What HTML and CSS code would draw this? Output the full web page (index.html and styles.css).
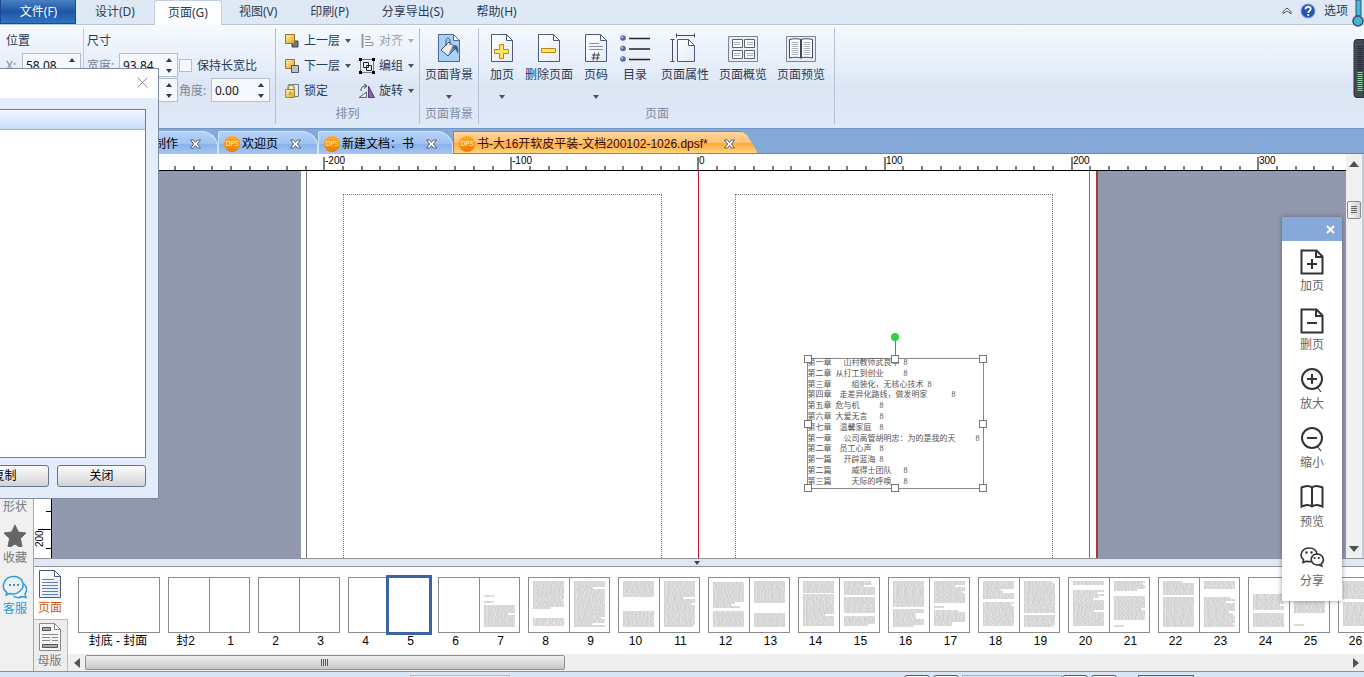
FILE: index.html
```html
<!DOCTYPE html>
<html lang="zh-CN">
<head>
<meta charset="utf-8">
<title>书-大16开软皮平装</title>
<link rel="stylesheet" href="styles.css">
</head>
<body>
<svg class="defs" aria-hidden="true">
  <defs>
    <linearGradient id="gold" x1="0" y1="0" x2="1" y2="1"><stop offset="0" stop-color="#fff3b0"/><stop offset="1" stop-color="#e0a020"/></linearGradient>
    <linearGradient id="paper" x1="0" y1="0" x2="1" y2="1"><stop offset="0" stop-color="#fff"/><stop offset="1" stop-color="#e4eaf6"/></linearGradient>
    <linearGradient id="orange" x1="0" y1="0" x2="0" y2="1"><stop offset="0" stop-color="#f9b02c"/><stop offset="1" stop-color="#ee7a00"/></linearGradient>
    <symbol id="logo" viewBox="0 0 16 16"><circle cx="8" cy="8" r="8" fill="url(#orange)"/><text x="8" y="10" text-anchor="middle" class="logo-text">DPS</text></symbol>
    <symbol id="close" viewBox="0 0 11 10"><path d="M.5 1h3l2 2.400 2-2.400h3L7.400 5l3.100 4h-3l-2-2.400L3.500 9h-3l3.100-4z" fill="#fff" stroke="#56606e" stroke-width="1"/></symbol>
    <symbol id="up" viewBox="0 0 6 4"><path d="M0 4h6L3 0z"/></symbol>
    <symbol id="down" viewBox="0 0 6 4"><path d="M0 0h6L3 4z"/></symbol>
    <symbol id="sheet" viewBox="0 0 24 30"><path d="M1.500 1.500h15l6 6v21h-21z" fill="url(#paper)" stroke="#4c5c78"/><path d="M16.500 1.500v6h6z" fill="#fff" stroke="#4c5c78"/></symbol>
  </defs>
</svg>
<div class="app">
  <nav class="menubar">
    <button class="menu file">文件(F)</button>
    <button class="menu">设计(D)</button>
    <button class="menu current">页面(G)</button>
    <button class="menu">视图(V)</button>
    <button class="menu">印刷(P)</button>
    <button class="menu">分享导出(S)</button>
    <button class="menu">帮助(H)</button>
    <div class="menu-end">
      <svg width="10" height="8" viewBox="0 0 10 8"><path d="M1 4.500 5 1l4 3.500v2L5 4 1 6.500z" fill="#fff" stroke="#444e60"/></svg>
      <svg width="16" height="16" viewBox="0 0 16 16"><circle cx="8" cy="8" r="7" fill="#2456b8" stroke="#8a9cc0"/><path d="M5.500 6.200C5.500 3 10.700 3 10.700 6 10.700 8 8.200 7.800 8.200 10" fill="none" stroke="#fff" stroke-width="1.800"/><circle cx="8.200" cy="12" r="1.100" fill="#fff"/></svg>
      <button class="plain">选项</button>
    </div>
  </nav>

  <section class="ribbon">
    <div class="group position">
      <div class="row">位置</div>
      <div class="row"><label class="dim" for="px">X:</label><span class="spin"><input id="px" value="58.08"><svg class="au"><use href="#up"/></svg><svg class="ad"><use href="#down"/></svg></span></div>
    </div>
    <div class="group size">
      <div class="row">尺寸</div>
      <div class="row"><label class="dim w" for="pw">宽度:</label><span class="spin"><input id="pw" value="93.84"><svg class="au"><use href="#up"/></svg><svg class="ad"><use href="#down"/></svg></span><input type="checkbox" id="keep"><label for="keep">保持长宽比</label></div>
      <div class="row"><label class="dim w" for="ph">高度:</label><span class="spin"><input id="ph" value=""><svg class="au"><use href="#up"/></svg><svg class="ad"><use href="#down"/></svg></span><label class="dim a" for="pa">角度:</label><span class="spin"><input id="pa" value="0.00"><svg class="au"><use href="#up"/></svg><svg class="ad"><use href="#down"/></svg></span></div>
    </div>
    <div class="group arrange">
      <div class="tools">
        <button class="tool"><svg class="ico" viewBox="0 0 16 16"><path d="M8 8h6v6H8z" fill="#6f7680" stroke="#444"/><path d="M1.500 1.500h9v9h-9z" fill="url(#gold)" stroke="#9a7420"/></svg><span>上一层</span><svg class="arr"><use href="#down"/></svg></button>
        <button class="tool off"><svg class="ico" viewBox="0 0 16 16" fill="none" stroke="#999"><path d="M3.500 1v14" stroke-width="2"/><path d="M6 3.500h5v3H6M6 9.500h8v3H6"/></svg><span>对齐</span><svg class="arr"><use href="#down"/></svg></button>
        <button class="tool"><svg class="ico" viewBox="0 0 16 16"><path d="M1.500 1.500h9v9h-9z" fill="url(#gold)" stroke="#9a7420"/><path d="M7.500 7.500h7v7h-7z" fill="#b9c2cc" stroke="#555"/></svg><span>下一层</span><svg class="arr"><use href="#down"/></svg></button>
        <button class="tool"><svg class="ico" viewBox="0 0 16 16"><path d="M1.500 1.500h13v13h-13z" fill="none" stroke="#777"/><path d="M4.500 4.500h5v5h-5zM7.500 7.500h5v5h-5z" fill="none" stroke="#222"/><path d="M0 0h3v3H0zM13 0h3v3h-3zM0 13h3v3H0zM13 13h3v3h-3z" fill="#000"/></svg><span>编组</span><svg class="arr"><use href="#down"/></svg></button>
        <button class="tool"><svg class="ico" viewBox="0 0 16 16"><path d="M4.500 1.500h10v12h-10z" fill="#dfe8f5" stroke="#6b7c96"/><path d="M4 7V5c0-4 6-4 6 0v2" fill="none" stroke="#b29a3c" stroke-width="1.500"/><path d="M1.500 6.500h9v8h-9z" fill="url(#gold)" stroke="#a88a2a"/><path d="M6 9v3" stroke="#a07a10"/></svg><span>锁定</span></button>
        <button class="tool"><svg class="ico" viewBox="0 0 16 16"><path d="M0 14.500h7.500V9z" fill="#dfe3ea" stroke="#667"/><path d="M9.500 14.500V3l6 11.500z" fill="#8a62a8" stroke="#5a3d78"/><path d="M2 8c0-4 2-5 5-5M5 1l3 2-3 2.500" fill="none" stroke="#445"/></svg><span>旋转</span><svg class="arr"><use href="#down"/></svg></button>
      </div>
      <div class="caption">排列</div>
    </div>
    <div class="group">
      <div class="bigs">
        <button class="big"><svg class="bico" viewBox="0 0 24 30"><path d="M1.500 1.500h15l6 6v21h-21z" fill="#a9d2f6" stroke="#48689a"/><path d="M16.500 1.500v6h6z" fill="#fff" stroke="#48689a"/><path d="m4 17 8-8 7 6-8 8z" fill="#e9eef4" stroke="#4a5668"/><path d="m11 22 8-7-3-3z" fill="#7d8998"/><path d="M9 13V8c0-4 4-4 4 0v4" fill="none" stroke="#4a5668"/><path d="M17 12c4 0 5 3 4 9-2-4-2-5-5-6z" fill="#3c5f94"/></svg><span>页面背景</span><svg class="arr"><use href="#down"/></svg></button>
      </div>
      <div class="caption">页面背景</div>
    </div>
    <div class="group">
      <div class="bigs">
        <button class="big narrow"><svg class="bico" viewBox="0 0 24 30"><use href="#sheet"/><path d="M9.500 11.500h4v5h5v4h-5v5h-4v-5h-5v-4h5z" fill="#ffe45c" stroke="#b58a1c"/></svg><span>加页</span><svg class="arr"><use href="#down"/></svg></button>
        <button class="big"><svg class="bico" viewBox="0 0 24 30"><use href="#sheet"/><path d="M4.500 15.500h14v4h-14z" fill="#ffe45c" stroke="#b58a1c"/></svg><span>删除页面</span></button>
        <button class="big narrow"><svg class="bico" viewBox="0 0 24 30"><use href="#sheet"/><path d="M5 10.500h10M5 13.500h14M5 16.500h14" stroke="#8792a4"/><path d="M10.500 19.500l-1.500 8M14.500 19.500l-1.500 8M8 22h8M7.500 25h8" stroke="#444" fill="none"/></svg><span>页码</span><svg class="arr"><use href="#down"/></svg></button>
        <button class="big mid"><svg class="bico wide" viewBox="0 0 30 30"><g fill="#5867b8"><circle cx="3" cy="5" r="2.800"/><circle cx="3" cy="15.500" r="2.800"/><circle cx="3" cy="26" r="2.800"/></g><g fill="#c8d0f4"><circle cx="2.200" cy="4.200" r="1"/><circle cx="2.200" cy="14.700" r="1"/><circle cx="2.200" cy="25.200" r="1"/></g><path d="M9 5.500h21M9 16h21M9 26.500h21" stroke="#222" stroke-width="1.500"/></svg><span>目录</span></button>
        <button class="big"><svg class="bico wide" viewBox="0 0 30 30"><path d="M6.500 2.500h18M6.500.5v4M24.500.5v4M2.500 6.500v22M.5 6.500h4M.5 28.500h4" stroke="#444d5c"/><path d="M7.500 6.500h11l6 6v16h-17z" fill="url(#paper)" stroke="#4c5c78"/><path d="M18.500 6.500v6h6z" fill="#fff" stroke="#4c5c78"/></svg><span>页面属性</span></button>
        <button class="big"><svg class="bico wide" viewBox="0 0 32 30"><path d="M1.500 3.500h29v25h-29z" fill="#e9edf4" stroke="#7b8494"/><path d="M5.500 6.500h10v8h-10zM17.500 6.500h10v8h-10zM5.500 17.500h10v8h-10zM17.500 17.500h10v8h-10z" fill="#fff" stroke="#596273"/><path d="M7 9.500h6M7 11.500h6M20 9.500h6M20 11.500h6M7 20.500h6M7 22.500h6M20 20.500h6M20 22.500h6" stroke="#a8afbb"/></svg><span>页面概览</span></button>
        <button class="big"><svg class="bico wide" viewBox="0 0 32 30"><path d="M1.500 3.500h29v25h-29z" fill="#e9edf4" stroke="#7b8494"/><path d="M4.500 6.500c4-1 9-1 11.500 0 2.500-1 7.500-1 11.500 0v18.500c-4-1-9-1-11.500 0-2.500-1-7.500-1-11.500 0z" fill="#fff" stroke="#3f4857"/><path d="M16 6.500V25" stroke="#3f4857" stroke-width="2"/><path d="M6.500 9.500h7M6.500 11.500h7M6.500 13.500h7M6.500 15.500h7M6.500 17.500h7M6.500 19.500h7M6.500 21.500h7M18.500 9.500h7M18.500 11.500h7M18.500 13.500h7M18.500 15.500h7M18.500 17.500h7M18.500 19.500h7M18.500 21.500h7" stroke="#a8afbb"/></svg><span>页面预览</span></button>
      </div>
      <div class="caption">页面</div>
    </div>
  </section>

  <div class="doctabs">
    <button class="doctab first"><span>制作</span><svg class="x"><use href="#close"/></svg></button>
    <button class="doctab"><svg class="logo"><use href="#logo"/></svg><span>欢迎页</span><svg class="x"><use href="#close"/></svg></button>
    <button class="doctab third"><svg class="logo"><use href="#logo"/></svg><span>新建文档：书</span><svg class="x"><use href="#close"/></svg></button>
    <div class="active-edge"><button class="doctab active"><svg class="logo"><use href="#logo"/></svg><span>书-大16开软皮平装-文档200102-1026.dpsf*</span><svg class="x"><use href="#close"/></svg></button></div>
  </div>

  <main class="main">
    <aside class="side">
      <button class="side-item">形状</button>
      <button class="side-item"><svg width="24" height="24" viewBox="0 0 24 24"><path d="m12 1 3.300 7 7.700 1-5.600 5.500L19 22.500h-3L12 20l-4 2.500H5l1.600-8L1 9l7.700-1z" fill="#666" stroke="#666" stroke-linejoin="round"/></svg>收藏</button>
      <button class="side-item blue"><svg width="26" height="24" viewBox="0 0 26 24" fill="none" stroke="#279bd8" stroke-width="1.400"><path d="M5 17.500C-2 13 2 1.500 11.500 1.500S24 11 18 16c-3 3-7 3.500-10 2.500L4 20z"/><path d="M21.500 8.500c4 3 3.500 8 1.500 10.500l1 3.500-4-1c-3 1.500-6 1.500-8.500-.5"/><path d="M7 10h2M11 10h2M15 10h2" stroke-width="2"/></svg>客服</button>
    </aside>
    <div class="content">
      <div class="editor">
        <div class="stage">
          <svg class="ruler" id="ruler"></svg>
          <div class="canvas-row">
            <svg class="vruler" width="17" height="60" viewBox="0 0 17 60"><path d="M12 13.500h5M4 31.500h13M12 50.500h5" stroke="#000"/><text transform="translate(9 49) rotate(-90)" class="tick">200</text></svg>
            <div class="canvas">
              <div class="spread">
                <div class="page left"><div class="margin"></div></div>
                <div class="page right"><div class="margin"></div>
                  <div class="frame">
                    <div class="stem"></div>
                    <pre class="toc">第一章　&ensp;山村教师武良华&ensp;8
第二章&ensp;从打工到创业　　&ensp;8
第三章　　&ensp;组装化，无核心技术&ensp;8
第四章　走差异化路线，做发明家　　　8
第五章&ensp;危与机　　&ensp;8
第六章&ensp;大爱无言　&ensp;8
第七章　温馨家庭　8
第一章　&ensp;公司高管胡明忠：为的是我的天　　&ensp;8
第二章　员工心声　8
第一篇　&ensp;开辟蓝海&ensp;8
第二篇　　&ensp;威得士团队　&ensp;8
第三篇　　&ensp;天际的呼唤　&ensp;8</pre>
                    <i class="h nw"></i><i class="h n"></i><i class="h ne"></i><i class="h w"></i><i class="h e"></i><i class="h sw"></i><i class="h s"></i><i class="h se"></i>
                  </div>
                </div>
              </div>
            </div>
          </div>
        </div>
        <div class="vscroll">
          <svg width="10" height="6" viewBox="0 0 10 6"><path d="M0 6h10L5 0z"/></svg>
          <div class="vthumb"><i></i></div>
          <svg width="10" height="6" viewBox="0 0 10 6"><path d="M0 0h10L5 6z"/></svg>
        </div>
      </div>
      <div class="splitter"><svg width="6" height="4"><use href="#down"/></svg></div>
      <div class="panel">
        <div class="ptabs">
          <button class="ptab on"><svg width="24" height="30" viewBox="0 0 24 30"><use href="#sheet"/><path d="M4 10.500h12M4 13.500h16M4 16.500h16M4 19.500h16M4 22.500h16M4 25.500h16" stroke="#5c80c0"/></svg>页面</button>
          <button class="ptab"><svg width="24" height="30" viewBox="0 0 24 30"><path d="M1.500 1.500h15l6 6v21h-21z" fill="#f6f6f6" stroke="#888"/><path d="M16.500 1.500v6h6z" fill="#fff" stroke="#888"/><path d="M4.500 5.500h8v3h-8zM4.500 22.500h15v3h-15z" fill="#aaa" stroke="#555"/><path d="M4 12.500h16M4 15.500h8M14 15.500h6M4 18.500h8M14 18.500h6" stroke="#888"/></svg>母版</button>
        </div>
        <div class="pages">
          <div class="strip" id="strip"></div>
          <div class="hscroll">
            <svg width="6" height="10" viewBox="0 0 6 10"><path d="M6 0v10L0 5z"/></svg>
            <div class="htrack"><div class="hthumb"><i></i></div></div>
            <svg width="6" height="10" viewBox="0 0 6 10"><path d="M0 0v10l6-5z"/></svg>
          </div>
        </div>
      </div>
    </div>
  </main>
  <footer class="status"><i class="field"></i><i class="btn first-btn"></i><i class="btn"></i><i class="box"></i><i class="btn"></i><i class="btn"></i><i class="bar"></i></footer>
</div>

<section class="dialog">
  <header><button class="dclose" aria-label="关闭"><svg width="11" height="11" viewBox="0 0 11 11"><path d="M.5.5l10 10M10.500.5l-10 10" stroke="#8a8a8a"/></svg></button></header>
  <div class="dbody">
    <div class="list"><div class="list-head"></div></div>
    <div class="dbuttons"><button class="copy">复制</button><button class="shut">关闭</button></div>
  </div>
</section>

<aside class="float">
  <header><button aria-label="关闭"><svg width="9" height="9" viewBox="0 0 9 9"><path d="M1 1l7 7M8 1 1 8" stroke="#fff" stroke-width="1.800"/></svg></button></header>
  <div class="fitems">
    <button><svg viewBox="0 0 26 28"><path d="M2.500 2.500h15l6 6v17h-21z"/><path d="M17 3v6h6"/><path d="M8 16h10M13 11v10"/></svg>加页</button>
    <button><svg viewBox="0 0 26 28"><path d="M2.500 2.500h15l6 6v17h-21z"/><path d="M17 3v6h6"/><path d="M8 16h10"/></svg>删页</button>
    <button><svg viewBox="0 0 26 28"><circle cx="13" cy="13" r="10"/><path d="M8 13h10M13 8v10"/><path d="m18 21 4 5" stroke-width="1.200"/></svg>放大</button>
    <button><svg viewBox="0 0 26 28"><circle cx="13" cy="13" r="10"/><path d="M8 13h10"/><path d="m18 21 4 5" stroke-width="1.200"/></svg>缩小</button>
    <button><svg viewBox="0 0 26 28"><path d="M2.500 3.500c4-2 8-2 10.500 0 2.500-2 6.500-2 10.500 0v19c-4-2-8-2-10.500 0-2.500-2-6.500-2-10.500 0zM13 3.500v19"/></svg>预览</button>
    <button><svg viewBox="0 0 26 28"><path d="M12 18.500c-1.500.3-3 .2-4.500-.3L4 19.500l.5-2.800C-.5 12.500 3 5 10 5c4.500 0 7.500 2.500 8 6" stroke-width="1.600"/><path d="M17.500 11c8 0 8 8 4.800 9.500l.4 2.500-2.700-1.300c-9 2-10.500-10.200-2.500-10.700z" stroke-width="1.600"/><g fill="#333" stroke="none"><circle cx="7.500" cy="9.500" r="1.200"/><circle cx="12.500" cy="9.500" r="1.200"/><circle cx="15.500" cy="15" r="1.100"/><circle cx="19.800" cy="15" r="1.100"/></g></svg>分享</button>
  </div>
</aside>
<svg class="gauge" width="14" height="100" viewBox="0 0 14 100"><path d="M6 0h5v16H6z" fill="#45b7de" stroke="#31506a"/><circle cx="8" cy="21" r="5" fill="#45b7de" stroke="#31506a" stroke-width="1.500"/><path d="M14 39.500H7a3 3 0 0 0-3 3v52a3 3 0 0 0 3 3h7z" fill="#434a58" stroke="#2c313c"/><path d="M10 46v25" stroke="#262b34" stroke-width="5" stroke-dasharray="1 1"/><path d="M10 72v19" stroke="#8fd09c" stroke-width="5" stroke-dasharray="1 1"/></svg>
<script src="app.js"></script>
</body>
</html>
```
FILE: styles.css
```css
* { box-sizing: border-box; }
html, body { margin: 0; height: 100%; overflow: hidden; }
body { font: 12px/16px "Noto Sans", "Noto Sans CJK SC", sans-serif; color: #2b3a58; background: #dfe8f6; }
button { font: inherit; color: inherit; background: none; border: 0; padding: 0; margin: 0; white-space: nowrap; }
svg { display: block; flex: none; }
.defs { position: absolute; width: 0; height: 0; }
.app { display: flex; flex-direction: column; height: 100vh; }
.logo-text { font: 7px "Noto Sans", sans-serif; fill: #fff2d0; }

.menubar { display: flex; height: 25px; background: #dfe8f5; border-bottom: 1px solid #b6c4da; flex: none; }
.menu { padding: 0 16px 0 17px; height: 24px; }
.menu.file { width: 76px; margin-right: 2px; color: #fff; background: linear-gradient(#4a80c4, #1d56a4 50%, #2f74c4); border: 1px solid #1c4a8c; border-top: 0; }
.menu.current { height: 25px; margin-left: 3px; background: #fbfdff; border: 1px solid #c2cfe2; border-bottom: 0; border-radius: 3px 3px 0 0; padding: 0 13px; }
.menu-end { display: flex; align-items: center; gap: 8px; margin-left: auto; padding: 0 16px 3px 0; }

.ribbon { display: flex; height: 103px; flex: none; padding-top: 3px; background: linear-gradient(#f6faff, #e3ecf8 45%, #dbe5f4 60%, #dfe9f8); }
.group { display: flex; flex-direction: column; height: 96px; border-right: 1px solid #b4c1d6; margin-bottom: 4px; }
.group:nth-child(5) { padding: 0 4px 0 5px; }
.position { width: 84px; padding-left: 6px; border-right-color: #c3cddd; height: 84px; }
.size { width: 192px; padding-left: 3px; }
.row { display: flex; align-items: center; height: 25px; white-space: nowrap; }
.dim { color: #7e8797; width: 16px; }
.dim.w { width: 32px; }
.dim.a { width: 33px; padding-left: 1px; }
.spin { position: relative; width: 59px; height: 25px; flex: none; }
.spin input { width: 100%; height: 24px; padding: 0 16px 0 3px; border: 1px solid #b4c0d2; background: #f5f8fc; font: inherit; color: #111; }
.au, .ad { position: absolute; right: 6px; width: 6px; height: 4px; fill: #2d3a55; }
.au { top: 5px; } .ad { bottom: 5px; }
#keep { appearance: none; width: 13px; height: 13px; margin: 0 5px 0 1px; border: 1px solid #b4c0d2; background: #f4f7fc; }
.tools { display: grid; grid-template-columns: 75px 60px; grid-auto-rows: 25px; padding: 0 0 0 8px; }
.tool { display: flex; align-items: center; }
.tool span { margin: 0 5px 0 4px; }
.tool.off { color: #9aa1ac; }
.ico { width: 16px; height: 16px; }
.arr { width: 6px; height: 4px; fill: #4a5468; }
.off .arr { fill: #aab0ba; }
.caption { margin-top: auto; padding-bottom: 2px; text-align: center; color: #7c8aa4; }
.bigs { display: flex; }
.big { display: flex; flex-direction: column; align-items: center; width: 58px; height: 75px; padding-top: 5px; }
.big.narrow { width: 36px; } .big.mid { width: 42px; }
.bico { width: 24px; height: 30px; margin-bottom: 4px; }
.bico.wide { width: 32px; }
.big .arr { margin-top: 12px; }

.doctabs { display: flex; height: 26px; padding-top: 2px; background: #84a9d9; border-top: 1px solid #7396c4; border-bottom: 1px solid #6f87a8; flex: none; font-family: "Liberation Sans", "Noto Sans CJK SC", sans-serif; }
.doctab { display: flex; align-items: center; height: 24px; width: 100px; padding-left: 5px; color: #000; background: linear-gradient(#b5d2fa, #9fc2f2 50%, #88b0ea 55%, #a9caf8); border: 1px solid #d5e5fa; border-bottom: 0; border-radius: 2px 16px 0 0; }
.doctab.first { width: 218px; padding-left: 153px; }
.doctab.third { width: 135px; }
.logo { width: 16px; height: 16px; margin-right: 2px; }
.x { width: 11px; height: 10px; margin-left: 12px; }
.active .x { margin-left: 16px; }
.active-edge { background: #a0703a; clip-path: polygon(0 0, 288px 0, 294px 4px, 100% 100%, 0 100%); }
.doctab.active { width: 305px; color: #3c0a00; border-color: #b98038; border-radius: 0; background: linear-gradient(#ffd59c, #ffc273 45%, #fbaa40 50%, #ffdd8a); }

.main { display: flex; flex: 1; min-height: 0; }
.side { display: flex; flex-direction: column; justify-content: flex-end; gap: 9px; width: 34px; padding-bottom: 54px; background: #f0f0f0; border-right: 1px solid #a8a8a8; }
.side-item { display: flex; flex-direction: column; align-items: center; gap: 2px; width: 30px; color: #777; }
.side-item.blue { color: #279bd8; }
.content { display: flex; flex-direction: column; flex: 1; min-width: 0; }
.editor { display: flex; flex: 1; min-height: 0; }
.stage { display: flex; flex-direction: column; flex: 1; min-width: 0; }
.ruler { width: calc(100% - 16px); margin-left: 16px; height: 17px; background: #fff; border-bottom: 1px solid #000; overflow: hidden; }
.tick { font: 10px "Liberation Sans", sans-serif; fill: #000; }
.canvas-row { display: flex; flex: 1; min-height: 0; background: #fff; }
.vruler { align-self: flex-end; }
.canvas { display: flex; justify-content: center; flex: 1; background: #9099ad; border-left: 1px solid #000; overflow: hidden; }
.spread { display: flex; width: 797px; margin-left: 1px; padding: 0 6px 0 5px; background: #fff; border-right: 2px solid #a83a34; }
.page { position: relative; flex: 1; padding: 23px 36px 0; border-left: 1px solid #777; }
.page.right { border-left: 1px solid #d01030; border-right: 1px solid #777; }
.margin { height: 600px; border: 1px dotted #777; }
.frame { position: absolute; left: 108px; top: 187px; width: 177px; height: 131px; border: 1px solid #888; }
.toc { margin: -1px 0 0 0; font: 8px/1.35 "Liberation Serif", "Noto Sans CJK SC", serif; color: #555; white-space: pre; }
.stem { position: absolute; left: 87px; top: -22px; width: 1px; height: 22px; background: #777; }
.stem::before { content: ""; position: absolute; left: -4px; top: -4px; width: 8px; height: 8px; border-radius: 50%; background: #2bd33c; }
.h { position: absolute; width: 8px; height: 8px; margin: -4px; background: #fff; border: 1px solid #777; }
.nw { left: 0; top: 0; } .n { left: 50%; top: 0; } .ne { left: 100%; top: 0; }
.w { left: 0; top: 50%; } .e { left: 100%; top: 50%; }
.sw { left: 0; top: 100%; } .s { left: 50%; top: 100%; } .se { left: 100%; top: 100%; }

.vscroll { display: flex; flex-direction: column; align-items: center; width: 18px; padding: 7px 0 6px; background: #f0f0f1; border-right: 2px solid #c4cad6; fill: #505050; }
.vthumb { width: 14px; height: 18px; margin: 34px 0 auto; padding: 4px 3px; border: 1px solid #8a8a8a; border-radius: 2px; background: linear-gradient(90deg, #f8f8f8, #d2d2d2); }
.vthumb i { display: block; height: 8px; background: repeating-linear-gradient(#666 0 1px, #ddd 1px 2px); }
.splitter { display: flex; align-items: center; justify-content: center; height: 9px; background: #e1e6f3; border: 1px solid #8f949e; border-width: 1px 0; padding-right: 4px; fill: #444; }
.panel { display: flex; height: 104px; background: #fff; }
.ptabs { display: flex; flex-direction: column; width: 34px; }
.ptab { display: flex; flex-direction: column; align-items: center; justify-content: center; gap: 1px; flex: 1; padding-right: 2px; color: #777; background: #ededed; border: 1px solid #bbb; border-width: 1px 1px 0 0; }
.ptab.on { color: #d0570c; background: #fff; border: 0; }
.pages { display: flex; flex-direction: column; flex: 1; min-width: 0; }
.strip { display: flex; flex: 1; padding: 10px 0 0 5px; overflow: hidden; color: #000; font-family: "Liberation Sans", "Noto Sans CJK SC", sans-serif; }
.pair { flex: none; width: 90px; }
.sheets { display: flex; width: 82px; height: 56px; margin-left: 5px; border: 1px solid #8c8c8c; }
.leaf { flex: 1; }
.leaf + .leaf { border-left: 1px solid #8c8c8c; }
.leaf.selected { outline: 3px solid #3a62a4; outline-offset: 0; border-color: #fff; }
.leaf svg { width: 100%; height: 54px; }
.names { display: flex; }
.names span { flex: 1; text-align: center; }
.hscroll { display: flex; align-items: center; height: 17px; padding: 0 5px 0 6px; gap: 5px; background: #efefef; fill: #555; }
.htrack { flex: 1; }
.hthumb { display: flex; align-items: center; justify-content: center; width: 38%; height: 15px; border: 1px solid #909090; border-radius: 2px; background: linear-gradient(#f0f0f0, #dcdcdc 50%, #c6c6c6); }
.hthumb i { width: 8px; height: 7px; background: repeating-linear-gradient(90deg, #555 0 1px, #ddd 1px 2px); }
.status { display: flex; height: 6px; flex: none; padding: 3px 170px 0 410px; background: #dbe6f5; border-top: 1px solid #7896b8; overflow: hidden; }
.status i { height: 8px; border: 1px solid #909aac; }
.status .field { width: 100px; background: #e9e9ec; border-color: #b5bcc9; }
.status .btn { width: 26px; margin-right: 3px; background: #fff; border-radius: 3px; border-color: #555; }
.status .first-btn { margin-left: auto; }
.status .box { width: 100px; border-color: #a8b4ca; }
.status .bar { width: 56px; margin-left: 18px; border-color: #4a5f94; }

.dialog { position: absolute; left: 0; top: 68px; width: 159px; background: #e2ecfb; border: 1px solid #7e8ba2; border-width: 1px 1px 1px 0; }
.dialog header { display: flex; justify-content: flex-end; height: 29px; padding: 8px 10px 0; background: #fff; }
.dclose { height: 11px; }
.dbody { padding: 11px 12px 11px 0; }
.list { height: 349px; background: #fff; border: 1px solid #6b7d9c; border-left: 0; }
.list-head { height: 20px; background: linear-gradient(#f2f7ff, #c9dbf9); border-bottom: 1px solid #9fb4d8; }
.dbuttons { display: flex; gap: 8px; margin: 7px 0 0 -40px; color: #000; }
.dbuttons button { width: 89px; height: 22px; flex: none; border: 1px solid #66748c; border-radius: 3px; background: linear-gradient(#fbfbfb, #e8e8ea 50%, #d3d3d6); }

.float { position: absolute; right: 22px; top: 217px; width: 60px; background: #fff; box-shadow: 0 0 5px rgba(50, 50, 70, .5); color: #666; }
.float header { display: flex; justify-content: flex-end; align-items: center; height: 24px; padding-right: 7px; background: #86a9d9; }
.fitems { display: flex; flex-direction: column; gap: 13px; padding: 7px 0 12px; }
.fitems button { display: flex; flex-direction: column; align-items: center; gap: 2px; }
.fitems svg { width: 26px; height: 28px; fill: none; stroke: #333; stroke-width: 2; }
.gauge { position: absolute; right: 0; top: 0; }
```
FILE: app.js
```js
const NS = 'http://www.w3.org/2000/svg';

function make(parent, name, attrs, text) {
  const node = document.createElementNS(NS, name);
  for (const key in attrs) node.setAttribute(key, attrs[key]);
  if (text !== undefined) node.textContent = text;
  parent.appendChild(node);
  return node;
}

// Horizontal ruler: zero sits on the spine, in the middle of the stage.
const origin = make(document.getElementById('ruler'), 'svg', { x: '50%', overflow: 'visible' });
const step = 18.68;
let ticks = '';
for (let i = -34; i <= 34; i++) {
  const x = Math.round(i * step);
  const major = i % 10 === 0;
  ticks += `M${x} ${major ? 3 : 12}V17`;
  if (major && i > -30) make(origin, 'text', { x: x + 1, y: 10, class: 'tick' }, i * 10);
}
make(origin, 'path', { d: ticks, stroke: '#000' });

// Text blocks of every page, as [top, bottom] pairs.
const blocks = {
  7: [[18, 19], [24, 25], [28, 50]], 8: [[4, 31], [41, 49]], 9: [[4, 49]],
  10: [[4, 19], [34, 49]], 11: [[4, 49]], 12: [[5, 31], [34, 49]],
  13: [[4, 25], [36, 49]], 14: [[4, 15], [17, 48]], 15: [[4, 17], [20, 35], [39, 49]],
  16: [[4, 29], [32, 49]], 17: [[4, 26], [29, 30], [33, 49]], 18: [[4, 22], [25, 49]],
  19: [[4, 35], [38, 49]], 20: [[4, 8], [13, 49]], 21: [[4, 13], [19, 43], [48, 49]],
  22: [[4, 18], [20, 49]], 23: [[4, 12], [20, 49]], 24: [[17, 33], [36, 49]],
  25: [[20, 35], [47, 49]], 26: [[4, 21], [25, 49]], 27: [[4, 49]]
};

let seed = 7;
const rand = () => (seed = (seed * 16807) % 2147483647) / 2147483647;

function leaf(number) {
  const box = document.createElement('div');
  box.className = 'leaf' + (number === 5 ? ' selected' : '');
  if (blocks[number]) {
    const svg = make(box, 'svg', { viewBox: '0 0 40 54', preserveAspectRatio: 'none' });
    for (const [top, bottom] of blocks[number]) {
      for (let y = top; y < bottom; y += 2) {
        const end = bottom - top < 3 ? 14 : rand() < 0.15 ? 22 + rand() * 12 : 35.5;
        make(svg, 'path', { d: `M4 ${y}H${end}`, stroke: '#e6e6e6', 'stroke-width': 2 });
        make(svg, 'path', {
          d: `M4 ${y}H${end}`, stroke: '#c2c2c2', 'stroke-width': 1,
          'stroke-dasharray': `${1 + rand() * 2} ${0.6 + rand()} ${2 + rand() * 2} 0.8`
        });
      }
    }
  }
  return box;
}

function pair(leaves, names) {
  const item = document.createElement('div');
  item.className = 'pair';
  const sheets = document.createElement('div');
  sheets.className = 'sheets';
  leaves.forEach(n => sheets.appendChild(leaf(n)));
  const labels = document.createElement('div');
  labels.className = 'names';
  names.forEach(n => {
    const label = document.createElement('span');
    label.textContent = n;
    labels.appendChild(label);
  });
  item.append(sheets, labels);
  document.getElementById('strip').appendChild(item);
}

pair([0], ['封底 - 封面']);
pair([0, 1], ['封2', '1']);
for (let n = 2; n <= 24; n += 2) pair([n, n + 1], [n, n + 1]);
pair([26, 27], [26, '']);
```
